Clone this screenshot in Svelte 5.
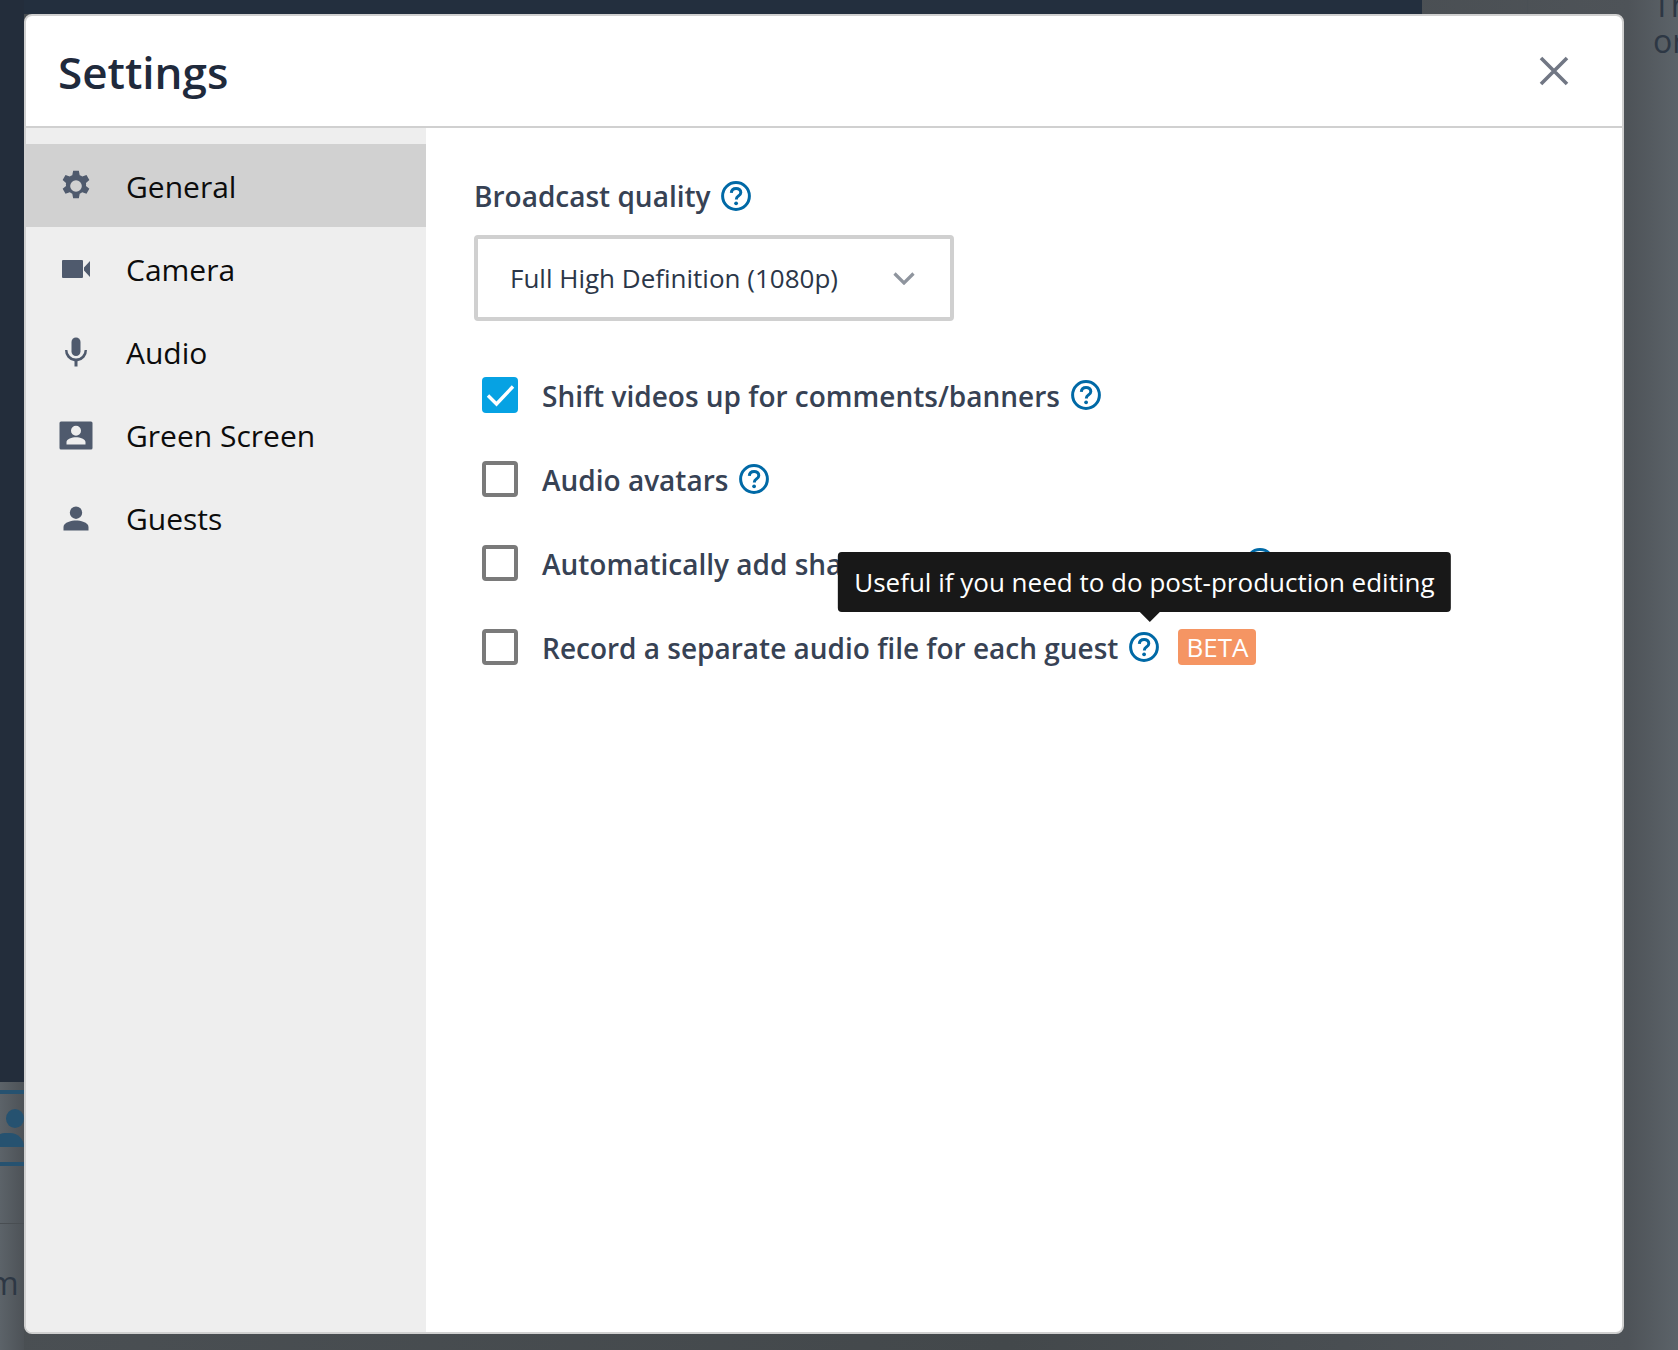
<script lang="ts">
  interface NavItem {
    label: string
    icon: string
    active?: boolean
  }

  const nav: NavItem[] = [
    { label: 'General', icon: 'gear', active: true },
    { label: 'Camera', icon: 'camera' },
    { label: 'Audio', icon: 'mic' },
    { label: 'Green Screen', icon: 'portrait' },
    { label: 'Guests', icon: 'person' }
  ]
</script>

{#snippet help()}
  <svg class="help" viewBox="0 0 30 30" aria-hidden="true">
    <circle cx="15" cy="15" r="13.4" fill="none" stroke="#0069a6" stroke-width="3" />
    <path d="M10.3 11.800c.2-2.800 2.200-4.400 4.800-4.400s4.700 1.600 4.700 4c0 1.800-1 2.700-2.400 3.600-1.300.8-2 1.500-2 3v.6" fill="none" stroke="#0069a6" stroke-width="3" />
    <circle cx="15.100" cy="22.300" r="1.900" fill="#0069a6" />
  </svg>
{/snippet}

{#snippet navIcon(name: string)}
  <svg class="nav-icon" viewBox="0 0 36 36" aria-hidden="true">
    {#if name === 'gear'}
      <path fill-rule="evenodd" transform="translate(18 18) scale(1.06) translate(-18 -18)" d="M15.300 3.600h5.400l.8 4.200c.9.3 1.700.8 2.400 1.300l4-1.400 2.700 4.700-3.200 2.800c.2.900.2 1.800 0 2.700l3.200 2.800-2.700 4.700-4-1.400c-.7.600-1.500 1-2.400 1.300l-.8 4.200h-5.400l-.8-4.200c-.9-.3-1.700-.8-2.400-1.300l-4 1.400-2.700-4.700 3.200-2.800c-.2-.9-.2-1.800 0-2.700l-3.200-2.800 2.700-4.700 4 1.400c.7-.6 1.500-1 2.400-1.300zM18 12.500a5.500 5.500 0 1 0 0 11 5.500 5.500 0 0 0 0-11z" />
    {:else if name === 'camera'}
      <path d="M5 9h19a1 1 0 0 1 1 1v16a1 1 0 0 1-1 1H5a1 1 0 0 1-1-1V10a1 1 0 0 1 1-1zM26 16.500L32 10v16l-6-6.500z" />
    {:else if name === 'mic'}
      <path d="M18 3.500a4.500 4.500 0 0 1 4.500 4.500v9.500a4.500 4.500 0 0 1-9 0V8A4.500 4.500 0 0 1 18 3.500z" />
      <path d="M7 16h2.400a8.600 8.600 0 0 0 17.200 0H29a11 11 0 0 1-9.500 11.300v5.200h-3v-5.200A11 11 0 0 1 7 16z" />
    {:else if name === 'portrait'}
      <path fill-rule="evenodd" d="M3 4.500h30a1.500 1.500 0 0 1 1.500 1.500v25a1.500 1.500 0 0 1-1.500 1.500H3A1.500 1.500 0 0 1 1.500 31V6A1.500 1.500 0 0 1 3 4.500zM18 8.800a5 5 0 1 0 0 10 5 5 0 0 0 0-10zM8.500 27.500h19v-2.500c0-3-5.500-4.800-9.500-4.800s-9.500 1.800-9.500 4.800z" />
    {:else}
      <circle cx="18" cy="12.700" r="6.200" />
      <path d="M5.500 30.500v-3.500c0-4.800 8.500-6.500 12.500-6.500s12.500 1.700 12.500 6.500v3.500z" />
    {/if}
  </svg>
{/snippet}

<div class="page">
  <div class="bg-top"></div>
  <div class="bg-rule"></div>
  <div class="bg-left"></div>
  <div class="bg-strip"></div>
  <div class="bg-band band-a"></div>
  <div class="bg-band band-b"></div>
  <div class="bg-band band-line"></div>
  <div class="bg-user"></div>
  <div class="bg-user-body"></div>
  <span class="bg-text bg-m">m</span>
  <span class="bg-text bg-th">Th</span>
  <span class="bg-text bg-or">or</span>

  <div class="modal">
    <header>
      <h1>Settings</h1>
      <svg class="close" viewBox="0 0 30 30" aria-hidden="true">
        <path d="M2 2l26 26M28 2L2 28" fill="none" stroke="#717784" stroke-width="3.600" />
      </svg>
    </header>

    <div class="body">
      <nav>
        {#each nav as item}
          <div class="nav-item" class:active={item.active}>
            {@render navIcon(item.icon)}
            <span>{item.label}</span>
          </div>
        {/each}
      </nav>

      <main>
        <div class="label">Broadcast quality {@render help()}</div>
        <div class="select">
          <span>Full High Definition (1080p)</span>
          <svg class="chevron" viewBox="0 0 22 14" aria-hidden="true">
            <path d="M1.500 2.500l9.500 9.500 9.500-9.500" fill="none" stroke="#8f959e" stroke-width="3.200" />
          </svg>
        </div>

        <div class="rows">
          <div class="row">
            <span class="box checked">
              <svg viewBox="0 0 36 36" aria-hidden="true">
                <path d="M6 18.500l8.500 8.500L31 9.500" fill="none" stroke="#fff" stroke-width="3.400" />
              </svg>
            </span>
            <span class="text">Shift videos up for comments/banners</span>
            {@render help()}
          </div>
          <div class="row">
            <span class="box"></span>
            <span class="text">Audio avatars</span>
            {@render help()}
          </div>
          <div class="row">
            <span class="box"></span>
            <span class="text">Automatically add shared links to video description</span>
            {@render help()}
          </div>
          <div class="row">
            <span class="box"></span>
            <span class="text">Record a separate audio file for each guest</span>
            <span class="tip-wrap">
              {@render help()}
              <span class="tooltip">Useful if you need to do post-production editing</span>
            </span>
            <span class="beta">BETA</span>
          </div>
        </div>
      </main>
    </div>
  </div>
</div>

<style>
  :global(body) {
    margin: 0;
  }

  .page {
    position: relative;
    width: 1678px;
    height: 1350px;
    overflow: hidden;
    font-family: 'Open Sans', 'Noto Sans', sans-serif;
    background: linear-gradient(90deg, #4a4f53 0%, #43484b 60%, #4e5358 97%, #5c6369 100%);
  }

  .bg-top {
    position: absolute;
    left: 0;
    top: 0;
    width: 1422px;
    height: 14px;
    background: #232f3e;
  }

  .bg-rule {
    position: absolute;
    left: 1527px;
    top: 0;
    width: 1px;
    height: 14px;
    background: #4a5055;
  }

  .bg-left {
    position: absolute;
    left: 0;
    top: 0;
    width: 24px;
    height: 1082px;
    background: #232d3b;
  }

  .bg-strip {
    position: absolute;
    left: 0;
    top: 1082px;
    width: 24px;
    height: 268px;
    background: linear-gradient(90deg, #5c6369, #4d5257);
  }

  .bg-band {
    position: absolute;
    left: 0;
    width: 24px;
    height: 4px;
    background: #265270;
  }

  .band-a {
    top: 1090px;
  }

  .band-b {
    top: 1162px;
  }

  .band-line {
    top: 1223px;
    height: 1px;
    background: #494e52;
  }

  .bg-user {
    position: absolute;
    left: 6px;
    top: 1109px;
    width: 18px;
    height: 19px;
    border-radius: 50%;
    background: #265270;
  }

  .bg-user-body {
    position: absolute;
    left: -9px;
    top: 1133px;
    width: 33px;
    height: 14px;
    border-radius: 16px 16px 0 0;
    background: #265270;
  }

  .bg-text {
    position: absolute;
    font-size: 32px;
    line-height: 1;
    color: #2d3744;
  }

  .bg-m {
    left: -11px;
    top: 1267px;
  }

  .bg-th {
    left: 1653px;
    top: -11px;
  }

  .bg-or {
    left: 1653px;
    top: 25px;
  }

  .modal {
    position: absolute;
    left: 24px;
    top: 14px;
    width: 1600px;
    height: 1320px;
    box-sizing: border-box;
    display: flex;
    flex-direction: column;
    border: 2px solid #d0d0d0;
    border-radius: 8px;
    background: #fff;
    overflow: hidden;
  }

  header {
    height: 112px;
    flex: none;
    box-sizing: border-box;
    display: flex;
    align-items: center;
    justify-content: space-between;
    padding: 0 53px 0 32px;
    border-bottom: 2px solid #d0d0d0;
  }

  h1 {
    margin: 2px 0 0;
    font-size: 44px;
    font-weight: 600;
    color: #1f2a3c;
  }

  .close {
    width: 30px;
    height: 30px;
  }

  .body {
    flex: 1;
    display: flex;
    min-height: 0;
  }

  nav {
    width: 400px;
    flex: none;
    box-sizing: border-box;
    padding-top: 16px;
    background: #eeeeee;
  }

  .nav-item {
    height: 83px;
    display: flex;
    align-items: center;
    gap: 32px;
    padding-left: 32px;
    font-size: 30px;
    color: #0c0c0c;
  }

  .nav-item span {
    padding-top: 2px;
  }

  .nav-item.active {
    background: #d1d1d1;
  }

  .nav-icon {
    width: 36px;
    height: 36px;
    fill: #4f5a6d;
  }

  main {
    flex: 1;
    padding: 48px 48px 0;
  }

  .label {
    display: flex;
    align-items: center;
    gap: 10px;
    height: 40px;
    font-size: 28px;
    font-weight: 600;
    color: #374254;
  }

  .help {
    width: 30px;
    height: 30px;
    flex: none;
  }

  .select {
    width: 480px;
    height: 86px;
    box-sizing: border-box;
    margin-top: 19px;
    display: flex;
    align-items: center;
    justify-content: space-between;
    padding: 0 35px 0 32px;
    border: 4px solid #d0d0d0;
    border-radius: 4px;
    font-size: 26px;
    color: #2b3648;
  }

  .chevron {
    width: 22px;
    height: 14px;
  }

  .rows {
    margin-top: 56px;
    display: flex;
    flex-direction: column;
    gap: 48px;
  }

  .row {
    height: 36px;
    display: flex;
    align-items: center;
    padding-left: 8px;
    font-size: 28px;
    font-weight: 600;
    color: #374254;
    white-space: nowrap;
  }

  .box {
    width: 36px;
    height: 36px;
    box-sizing: border-box;
    flex: none;
    margin-right: 24px;
    border: 4px solid #7a7a7a;
    border-radius: 4px;
  }

  .box.checked {
    border: none;
    background: #06a2e3;
  }

  .box svg {
    display: block;
    width: 36px;
    height: 36px;
  }

  .text {
    margin-right: 11px;
    padding-top: 2px;
  }

  .tip-wrap {
    position: relative;
    display: flex;
    margin-right: 19px;
  }

  .tooltip {
    position: absolute;
    left: 50%;
    bottom: 50px;
    transform: translateX(-50%);
    padding: 0 16px;
    height: 60px;
    line-height: 60px;
    background: #181818;
    border-radius: 4px;
    color: #fff;
    font-size: 26px;
    font-weight: 400;
  }

  .tooltip::after {
    content: '';
    position: absolute;
    left: calc(50% + 5px);
    bottom: -10px;
    margin-left: -10px;
    border: 10px solid transparent;
    border-bottom: none;
    border-top-color: #181818;
  }

  .beta {
    width: 78px;
    height: 36px;
    line-height: 36px;
    text-align: center;
    background: #f59563;
    border-radius: 4px;
    color: #fff;
    font-size: 26px;
    font-weight: 400;
  }
</style>
